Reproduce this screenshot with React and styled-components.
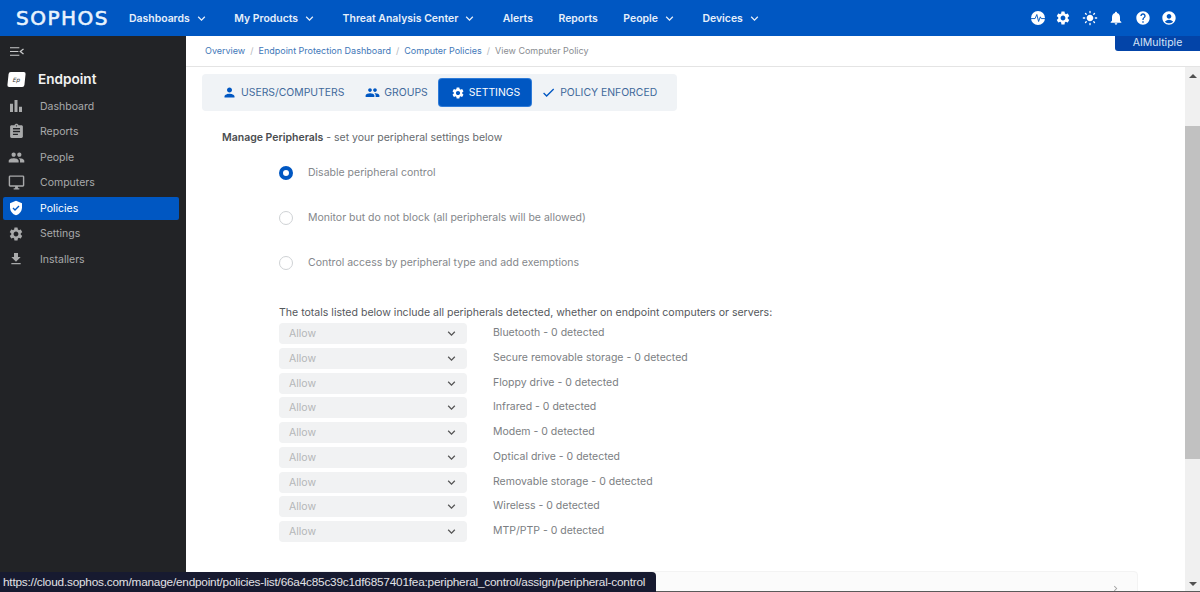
import React from 'react';
import styled, { createGlobalStyle } from 'styled-components';
import {
  MdKeyboardArrowDown, MdKeyboardArrowRight, MdSettings, MdLightMode, MdNotifications, MdHelp, MdAccountCircle,
  MdBarChart, MdAssignment, MdPeople, MdOutlineDesktopWindows, MdFileDownload, MdPerson, MdCheck,
} from 'react-icons/md';

const GlobalStyle = createGlobalStyle`
  html, body {
    margin: 0;
    height: 100%;
    overflow: hidden;
    background: #fff;
    font-family: Inter, "Noto Sans", sans-serif;
  }
`;

const navItems = [
  { label: 'Dashboards', arrow: true },
  { label: 'My Products', arrow: true },
  { label: 'Threat Analysis Center', arrow: true },
  { label: 'Alerts' },
  { label: 'Reports' },
  { label: 'People', arrow: true },
  { label: 'Devices', arrow: true },
];

const ShieldIcon = () => (
  <svg width="16" height="16" viewBox="0 0 24 24">
    <path fill="currentColor" d="M12 1 3 5v6c0 5.500 3.800 10.700 9 12 5.200-1.300 9-6.500 9-12V5l-9-4z" />
    <path fill="none" stroke="#0057c2" strokeWidth="2" d="m7.500 12 3 3 6-6" />
  </svg>
);

const PulseIcon = () => (
  <svg width="14" height="14" viewBox="0 0 24 24">
    <circle cx="12" cy="12" r="12" fill="#fff" />
    <path fill="none" stroke="#0057c2" strokeWidth="1.600" d="M0 13h7l3-7 3 12 3-8 1.500 3H24" />
  </svg>
);

const MenuCollapseIcon = () => (
  <svg width="14" height="9" viewBox="0 0 15 12" preserveAspectRatio="none">
    <path fill="none" stroke="#c9cacb" strokeWidth="1.500" d="M0 1h10M0 6h9M0 11h10M14.500 2.500 11 6l3.500 3.500" />
  </svg>
);

const sideItems = [
  { label: 'Dashboard', icon: <MdBarChart size={18} /> },
  { label: 'Reports', icon: <MdAssignment size={17} /> },
  { label: 'People', icon: <MdPeople size={17} /> },
  { label: 'Computers', icon: <MdOutlineDesktopWindows size={17} /> },
  { label: 'Policies', icon: <ShieldIcon />, active: true },
  { label: 'Settings', icon: <MdSettings size={16} /> },
  { label: 'Installers', icon: <MdFileDownload size={16} /> },
];

const tabs = [
  { label: 'USERS/COMPUTERS', icon: <MdPerson size={15} /> },
  { label: 'GROUPS', icon: <MdPeople size={15} /> },
  { label: 'SETTINGS', icon: <MdSettings size={14} />, active: true },
  { label: 'POLICY ENFORCED', icon: <MdCheck size={15} /> },
];

const radios = [
  { label: 'Disable peripheral control', checked: true },
  { label: 'Monitor but do not block (all peripherals will be allowed)' },
  { label: 'Control access by peripheral type and add exemptions' },
];

const peripherals = [
  'Bluetooth', 'Secure removable storage', 'Floppy drive', 'Infrared', 'Modem',
  'Optical drive', 'Removable storage', 'Wireless', 'MTP/PTP',
];

const App = () => {
  return (
    <Page>
      <GlobalStyle />
      <TopBar>
        <Logo>SOPHOS</Logo>
        <TopNav>
          {navItems.map((item) => (
            <TopNavItem key={item.label}>
              {item.label}
              {item.arrow && <MdKeyboardArrowDown size={15} />}
            </TopNavItem>
          ))}
        </TopNav>
        <TopIcons>
          <PulseIcon />
          <MdSettings size={16} />
          <MdLightMode size={16} />
          <MdNotifications size={16} />
          <MdHelp size={16} />
          <MdAccountCircle size={16} />
        </TopIcons>
      </TopBar>
      <Body>
        <Sidebar>
          <Collapse><MenuCollapseIcon /></Collapse>
          <Product>
            <ProductBadge>Ep</ProductBadge>
            Endpoint
          </Product>
          <SideList>
            {sideItems.map((item) => (
              <SideItem key={item.label} $active={item.active}>
                <SideIcon>{item.icon}</SideIcon>
                {item.label}
              </SideItem>
            ))}
          </SideList>
        </Sidebar>
        <Main>
          <Breadcrumbs>
            <Crumb>Overview</Crumb>
            <Slash>/</Slash>
            <Crumb>Endpoint Protection Dashboard</Crumb>
            <Slash>/</Slash>
            <Crumb>Computer Policies</Crumb>
            <Slash>/</Slash>
            <CurrentCrumb>View Computer Policy</CurrentCrumb>
          </Breadcrumbs>
          <Scroller>
            <Content>
              <TabBar>
                {tabs.map((tab) => (
                  <Tab key={tab.label} $active={tab.active}>
                    {tab.icon}
                    {tab.label}
                  </Tab>
                ))}
              </TabBar>
              <Heading><strong>Manage Peripherals</strong> - set your peripheral settings below</Heading>
              <RadioList>
                {radios.map((radio) => (
                  <RadioRow key={radio.label}>
                    <Radio $checked={radio.checked} />
                    {radio.label}
                  </RadioRow>
                ))}
              </RadioList>
              <Totals>The totals listed below include all peripherals detected, whether on endpoint computers or servers:</Totals>
              <PeripheralList>
                {peripherals.map((name) => (
                  <PeripheralRow key={name}>
                    <FakeSelect>
                      Allow
                      <MdKeyboardArrowDown size={15} color="#555" />
                    </FakeSelect>
                    <PeripheralName>{name} - 0 detected</PeripheralName>
                  </PeripheralRow>
                ))}
              </PeripheralList>
              <NextPanel><MdKeyboardArrowRight size={11} /></NextPanel>
            </Content>
            <Scrollbar>
              <ArrowUp />
              <ScrollTrack><ScrollThumb /></ScrollTrack>
              <ArrowDown />
            </Scrollbar>
          </Scroller>
        </Main>
      </Body>
      <AccountTag>AIMultiple</AccountTag>
      <StatusLink>https://cloud.sophos.com/manage/endpoint/policies-list/66a4c85c39c1df6857401fea:peripheral_control/assign/peripheral-control</StatusLink>
      <WindowEdge />
    </Page>
  );
};

const Page = styled.div`
  position: relative;
  width: 1200px;
  height: 592px;
  overflow: hidden;
  display: flex;
  flex-direction: column;
`;

const TopBar = styled.header`
  height: 36px;
  flex: none;
  display: flex;
  align-items: center;
  background: #0057c2;
  color: #fff;
`;

const Logo = styled.div`
  width: 129px;
  padding-left: 16px;
  box-sizing: border-box;
  font-family: "DejaVu Sans", sans-serif;
  font-size: 20px;
  letter-spacing: 1.500px;
  -webkit-text-stroke: 0.6px #e8f3fd;
  color: #e8f3fd;
`;

const TopNav = styled.nav`
  display: flex;
  gap: 25.500px;
`;

const TopNavItem = styled.div`
  display: flex;
  align-items: center;
  gap: 4px;
  font-size: 10.450px;
  font-weight: 600;
  color: #e6effa;
  white-space: nowrap;
`;

const TopIcons = styled.div`
  margin-left: auto;
  padding-right: 23px;
  display: flex;
  align-items: center;
  gap: 10.500px;
`;

const Body = styled.div`
  flex: 1;
  display: flex;
  min-height: 0;
`;

const Sidebar = styled.aside`
  width: 186px;
  flex: none;
  background: #222326;
`;

const Collapse = styled.div`
  height: 14px;
  padding: 11px 0 0 10px;
  line-height: 0;
`;

const Product = styled.div`
  margin-top: 9px;
  padding-left: 8px;
  display: flex;
  align-items: center;
  gap: 13px;
  height: 18px;
  font-size: 13.600px;
  font-weight: 600;
  color: #f2f2f2;
`;

const ProductBadge = styled.div`
  width: 17px;
  height: 15px;
  display: flex;
  align-items: center;
  justify-content: center;
  border-radius: 2px;
  background: #fff;
  color: #333;
  font-size: 6px;
  font-style: italic;
  font-weight: 400;
  transform: skewX(-6deg);
`;

const SideList = styled.div`
  margin-top: 7px;
  padding: 0 7px 0 3px;
  display: flex;
  flex-direction: column;
  gap: 3px;
`;

const SideItem = styled.div`
  height: 22.500px;
  display: flex;
  align-items: center;
  gap: 15px;
  padding-left: 4px;
  border-radius: 2px;
  font-size: 10.500px;
  background: ${(props) => (props.$active ? '#0057c2' : 'transparent')};
  color: ${(props) => (props.$active ? '#fff' : '#a9aaab')};
`;

const SideIcon = styled.span`
  width: 18px;
  display: flex;
  justify-content: center;
`;

const Main = styled.main`
  flex: 1;
  min-width: 0;
  display: flex;
  flex-direction: column;
`;

const Breadcrumbs = styled.div`
  height: 31px;
  flex: none;
  box-sizing: border-box;
  padding: 0 0 2px 19px;
  display: flex;
  align-items: center;
  border-bottom: 1px solid #e4e4e4;
  font-size: 9px;
`;

const Crumb = styled.span`
  color: #3f78b8;
`;

const CurrentCrumb = styled.span`
  color: #8a8d91;
`;

const Slash = styled.span`
  margin: 0 5px;
  color: #b5b8bb;
`;

const Scroller = styled.div`
  flex: 1;
  min-height: 0;
  display: flex;
`;

const Content = styled.div`
  flex: 1;
  min-width: 0;
  padding: 7px 0 0 16px;
`;

const TabBar = styled.div`
  width: 475px;
  height: 37px;
  box-sizing: border-box;
  padding: 0 12px 0 20px;
  display: flex;
  align-items: center;
  border-radius: 4px;
  background: #f0f3f6;
`;

const Tab = styled.div`
  display: flex;
  align-items: center;
  gap: 4px;
  height: ${(props) => (props.$active ? '27px' : 'auto')};
  margin-right: ${(props) => (props.$active ? '10px' : '21px')};
  margin-left: ${(props) => (props.$active ? '-10px' : '0')};
  padding: ${(props) => (props.$active ? '0 11px 0 12px' : '0')};
  box-sizing: border-box;
  border-radius: 3px;
  font-size: 10.400px;
  white-space: nowrap;
  background: ${(props) => (props.$active ? '#0057c2' : 'transparent')};
  box-shadow: ${(props) => (props.$active ? '0 0 0 1px #2e7bd8' : 'none')};
  color: ${(props) => (props.$active ? '#fff' : '#41699b')};
  & > svg {
    color: ${(props) => (props.$active ? '#fff' : '#0057c2')};
  }
`;

const Heading = styled.div`
  margin: 20px 0 0 20px;
  height: 14px;
  line-height: 14px;
  font-size: 10.500px;
  color: #666a6e;
  & > strong {
    font-weight: 600;
    color: #4a4d50;
  }
`;

const RadioList = styled.div`
  margin: 20px 0 0 77px;
  display: flex;
  flex-direction: column;
  gap: 30.500px;
`;

const RadioRow = styled.div`
  height: 14.500px;
  display: flex;
  align-items: center;
  gap: 15px;
  font-size: 10.500px;
  color: #84878b;
`;

const Radio = styled.span`
  width: 14px;
  height: 14px;
  flex: none;
  box-sizing: border-box;
  border-radius: 50%;
  position: relative;
  top: 1px;
  background: #fff;
  border: ${(props) => (props.$checked ? '4.500px solid #0057c2' : '1px solid #cfd2d5')};
`;

const Totals = styled.div`
  margin: 36px 0 0 77px;
  height: 14px;
  line-height: 14px;
  font-size: 10.550px;
  color: #55585c;
`;

const PeripheralList = styled.div`
  margin: 3.500px 0 0 77px;
  display: flex;
  flex-direction: column;
  gap: 3.750px;
`;

const PeripheralRow = styled.div`
  height: 21px;
  display: flex;
  align-items: center;
  gap: 26px;
`;

const FakeSelect = styled.div`
  width: 188px;
  height: 21px;
  flex: none;
  box-sizing: border-box;
  padding: 0 8px 0 10px;
  display: flex;
  align-items: center;
  justify-content: space-between;
  border-radius: 4px;
  background: #f1f2f3;
  font-size: 10.500px;
  color: #b4b6b8;
`;

const PeripheralName = styled.span`
  position: relative;
  top: -1px;
  font-size: 10.500px;
  color: #7b7e82;
`;

const NextPanel = styled.div`
  margin: 28.500px 47px 0 77px;
  height: 30px;
  box-sizing: border-box;
  padding: 11px 16px 0 0;
  display: flex;
  justify-content: flex-end;
  align-items: flex-start;
  border: 1px solid #f3f3f3;
  border-radius: 4px;
  background: #fbfbfb;
  color: #a5a5a5;
`;

const Scrollbar = styled.div`
  width: 15px;
  flex: none;
  display: flex;
  flex-direction: column;
  align-items: center;
  background: #f0f0f0;
`;

const ArrowUp = styled.div`
  margin: 7px 0 5px;
  width: 0;
  height: 0;
  border-left: 4px solid transparent;
  border-right: 4px solid transparent;
  border-bottom: 4px solid #505050;
`;

const ArrowDown = styled.div`
  margin: 5px 0 6px;
  width: 0;
  height: 0;
  border-left: 4px solid transparent;
  border-right: 4px solid transparent;
  border-top: 4px solid #505050;
`;

const ScrollTrack = styled.div`
  flex: 1;
  width: 100%;
  padding-top: 43px;
  box-sizing: border-box;
`;

const ScrollThumb = styled.div`
  height: 333px;
  background: #c1c1c1;
`;

const AccountTag = styled.div`
  position: absolute;
  top: 36px;
  right: 0;
  width: 85px;
  height: 15px;
  line-height: 14px;
  text-align: center;
  border-bottom-left-radius: 3px;
  background: #0344a8;
  color: #d6e4f7;
  font-size: 10.500px;
`;

const StatusLink = styled.div`
  position: absolute;
  left: 0;
  bottom: 0;
  width: 656px;
  height: 20px;
  line-height: 21px;
  box-sizing: border-box;
  padding-left: 3px;
  border-top-right-radius: 4px;
  background: #171a30;
  color: #e2e2e6;
  font-family: "Liberation Sans", sans-serif;
  font-size: 11.800px;
  letter-spacing: -0.210px;
  white-space: nowrap;
`;

const WindowEdge = styled.div`
  position: absolute;
  left: 656px;
  right: 0;
  bottom: 0;
  height: 1.500px;
  background: #5a5a5a;
`;

export default App;
